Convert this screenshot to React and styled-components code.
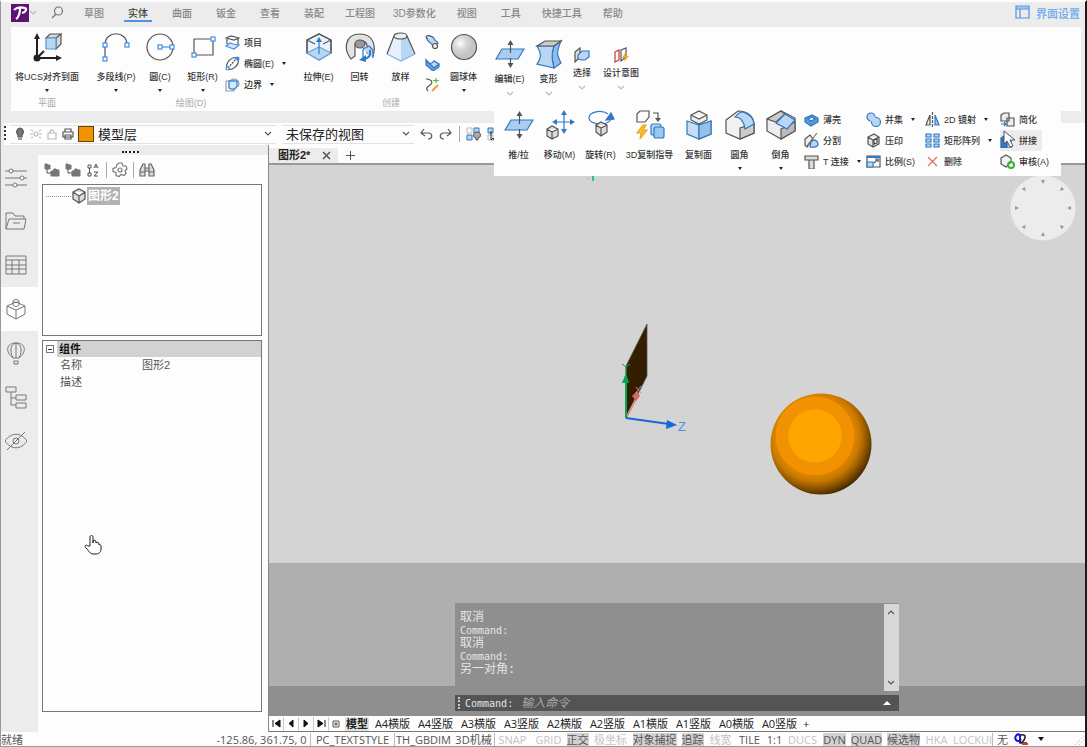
import React, { useState } from 'react'
import styled, { createGlobalStyle, css } from 'styled-components'

const GlobalStyle = createGlobalStyle`
    * {
        box-sizing: border-box;
    }
    body {
        margin: 0;
        background: #fdfdfd;
        font-family: "Liberation Sans", "Noto Sans CJK SC", sans-serif;
        color: #333;
    }
    button, input, select {
        font: inherit;
        color: inherit;
        border: 0;
        padding: 0;
        margin: 0;
        background: none;
    }
    svg {
        display: block;
        flex: none;
    }
`

const dark = '#555'
const blue = '#2f78c4'
const pale = '#b9d6f2'

const StyledApp = styled.div`
    min-height: 100vh;
    display: flex;
    flex-direction: column;
    border-left: 1px solid #999;
    border-right: 2px solid #1a1a1a;
    border-top: 2px solid #fdfdfd;
    background: #ececec;
    overflow: hidden;
`

/* ---------- menu ---------- */

const StyledMenu = styled.header`
    height: 25px;
    display: flex;
    align-items: center;
    padding: 0 5px 4px 10px;
    font-size: 10px;
    font-weight: 500;
    color: #888;
`

const StyledSearch = styled.button`
    margin: 0 8px 0 14px;
    display: flex;
    height: 16px;
    align-items: center;
`

const StyledTab = styled.button`
    padding: 0 ${({ $wide }) => ($wide ? 9 : 12)}px;
    height: 19px;
    white-space: nowrap;
    position: relative;
    color: ${({ $active }) => ($active ? '#444' : '#888')};
    ${({ $active }) => $active && css`
        &::after {
            content: "";
            position: absolute;
            left: 8px;
            right: 8px;
            bottom: 0;
            height: 2px;
            background: #4c93e6;
        }
    `}
`

const StyledSettings = styled.button`
    margin-left: auto;
    display: flex;
    align-items: center;
    gap: 6px;
    font-size: 11px;
    color: #6aa9ee;
`

/* ---------- ribbon ---------- */

const StyledRibbon = styled.section`
    position: relative;
    z-index: 2;
    height: 84px;
    margin: 0 4px 12px 10px;
    display: flex;
    background: #fdfdfd;
    font-size: 9px;
    line-height: 12px;
    font-weight: 500;
    white-space: nowrap;
`

const StyledGroup = styled.div`
    display: flex;
    flex-direction: column;
    align-items: center;
    margin-right: ${({ $gap }) => $gap || 0}px;
    padding-top: ${({ $top }) => $top || 5}px;
`

const StyledGroupRow = styled.div`
    display: flex;
    height: 65px;
`

const StyledGroupName = styled.div`
    color: #aaa;
    font-weight: 400;
`

const StyledTool = styled.button`
    flex: none;
    width: ${({ $w }) => $w}px;
    display: flex;
    flex-direction: column;
    align-items: center;
    justify-content: flex-start;
    padding-top: ${({ $top }) => $top || 0}px;
    white-space: nowrap;
`

const StyledToolText = styled.span`
    margin: ${({ $tight }) => ($tight ? 4 : 9)}px 0 6px;
`

const StyledCaret = styled.span`
    width: 0;
    height: 0;
    border: 2px solid transparent;
    border-top: 3px solid #222;
    border-bottom: 0;
`

const StyledList = styled.div`
    display: flex;
    flex-direction: column;
    width: ${({ $w }) => $w}px;
    padding-left: ${({ $center }) => ($center ? 0 : 2)}px;
    align-items: ${({ $center }) => ($center ? 'center' : 'stretch')};
`

const StyledSmallTool = styled.button`
    height: 21px;
    display: flex;
    align-items: center;
    gap: 4px;
    padding-right: 5px;
    justify-self: start;
    background: ${({ $hover }) => ($hover ? '#ececec' : 'none')};
    & > ${StyledCaret} {
        margin-left: 4px;
    }
`

const StyledFlyout = styled.div`
    position: absolute;
    right: 20px;
    top: 81px;
    width: 567px;
    height: 68px;
    padding-left: 4px;
    display: flex;
    background: #fdfdfd;
`

const StyledFlyoutGrid = styled.div`
    display: grid;
    grid-template-columns: 62px 59px 75px auto;
    grid-auto-rows: 21px;
    margin-left: 3px;
    padding-top: 1px;
    align-content: start;
`

/* ---------- layer bar ---------- */

const StyledLayerBar = styled.section`
    height: 22px;
    margin-left: 3px;
    display: flex;
    align-items: center;
    background: #fdfdfd;
    font-size: 13px;
    color: #222;
`

const StyledCombo = styled.label`
    height: 19px;
    display: flex;
    align-items: center;
    width: ${({ $w }) => $w}px;
    margin-left: ${({ $ml }) => $ml}px;
    border: solid #e2e2e2;
    border-width: 1px 0;
    padding-right: 4px;
    gap: 4px;
`

const StyledSelect = styled.select`
    flex: 1;
    appearance: none;
    outline: 0;
    height: 17px;
    line-height: 17px;
`

const StyledSwatch = styled.span`
    width: 16px;
    height: 16px;
    background: #f39200;
    border: 1px solid #6b4100;
`

const StyledBarTools = styled.div`
    display: flex;
    align-items: center;
    gap: 6px;
    margin-left: 5px;
`

const StyledBarLine = styled.span`
    width: 1px;
    height: 16px;
    background: #aaa;
`

/* ---------- left side ---------- */

const StyledWork = styled.main`
    flex: 1;
    display: flex;
`

const StyledLeft = styled.aside`
    width: 267px;
    display: flex;
    flex-direction: column;
`

const StyledGrip = styled.div`
    height: 10px;
    display: flex;
    align-items: center;
    justify-content: center;
    padding: 4px 8px 0 0;
    &::after {
        content: "";
        width: 17px;
        border-top: 2px dotted #222;
    }
`

const StyledLeftBody = styled.div`
    flex: 1;
    display: flex;
`

const StyledRail = styled.nav`
    width: 37px;
    display: flex;
    flex-direction: column;
`

const StyledRailButton = styled.button`
    height: 44px;
    padding-left: 4px;
    display: flex;
    align-items: center;
    background: ${({ $active }) => ($active ? '#fdfdfd' : 'none')};
`

const StyledPanel = styled.div`
    flex: 1;
    display: flex;
    flex-direction: column;
    padding: 5px 6px 20px 4px;
    background: #fdfdfd;
`

const StyledPanelTools = styled.div`
    height: 24px;
    padding: 0 0 4px 2px;
    display: flex;
    align-items: center;
    gap: 5px;
`

const StyledBox = styled.div`
    border: 1px solid #777;
    background: #fdfdfd;
    height: ${({ $h }) => ($h ? `${$h}px` : 'auto')};
    flex: ${({ $h }) => ($h ? 'none' : 1)};
    margin-bottom: ${({ $h }) => ($h ? 4 : 0)}px;
`

const StyledTreeItem = styled.div`
    display: flex;
    align-items: center;
    padding: 2px 0 0 3px;
    &::before {
        content: "";
        width: 25px;
        border-top: 1px dotted #999;
    }
`

const StyledTreeName = styled.span`
    font-size: 12px;
    line-height: 18px;
    padding: 0 1px;
    font-weight: 700;
    background: #b2b2b2;
    color: #fff;
`

const StyledTable = styled.table`
    width: 100%;
    border-collapse: collapse;
    font-size: 11px;
    line-height: 17px;
    color: #555;
    th, td {
        padding: 0;
        text-align: left;
        font-weight: 400;
        width: 99px;
    }
    th:first-child {
        padding-left: 17px;
    }
    td {
        width: auto;
    }
`

const StyledTableHead = styled.div`
    height: 16px;
    line-height: 16px;
    font-size: 11px;
    display: flex;
    align-items: center;
    color: #111;
    font-weight: 700;
    & > button {
        width: 8px;
        height: 8px;
        margin: 0 3px;
        border: 1px solid #777;
        display: flex;
        align-items: center;
        justify-content: center;
    }
    & > button::after {
        content: "";
        width: 4px;
        height: 1px;
        background: #333;
    }
    & > span {
        flex: 1;
        padding-left: 2px;
        text-align: left;
        background: #d2d2d2;
    }
`

/* ---------- drawing area ---------- */

const StyledRight = styled.div`
    flex: 1;
    min-width: 0;
    display: flex;
    flex-direction: column;
    border-left: 1px solid #888;
`

const StyledDocTabs = styled.div`
    height: 18px;
    padding-top: 3px;
    display: flex;
    background: #fdfdfd;
`

const StyledDocTab = styled.div`
    display: flex;
    align-items: center;
    gap: 11px;
    padding: 0 6px 0 9px;
    background: #ececec;
    font-size: 11px;
    line-height: 15px;
    font-weight: 700;
    color: #222;
`

const StyledPlainButton = styled.button`
    display: flex;
    align-items: center;
    padding: 0 ${({ $pad }) => $pad || 0}px;
    min-height: ${({ $h }) => $h || 0}px;
`

const StyledCanvas = styled.div`
    flex: 1;
    position: relative;
    display: flex;
    flex-direction: column;
    border-top: 2px solid #999;
    background: #d4d4d4;
`

const StyledFloor = styled.div`
    margin-top: auto;
    height: 153px;
    background: #afafaf;
    border-bottom: 30px solid #8f8f8f;
`

const StyledScene = styled.svg`
    position: absolute;
    left: 350px;
    top: 156px;
`

const StyledOrbit = styled.svg`
    position: absolute;
    right: 9px;
    top: 10px;
`

const StyledTick = styled.svg`
    position: absolute;
    left: 317px;
    top: 9px;
`

const StyledCommand = styled.div`
    position: absolute;
    left: 0;
    right: 0;
    bottom: 5px;
    width: 444px;
    margin: 0 auto;
    background: #8f8f8f;
    color: #e6e6e6;
    font-family: "DejaVu Sans Mono", "Noto Sans CJK SC", monospace;
    font-size: 10px;
`

const StyledLog = styled.div`
    height: 92px;
    padding: 8px 5px 0;
    line-height: 13px;
    display: flex;
    flex-direction: column;
`

const StyledLogText = styled.span`
    font-size: ${({ $cjk }) => ($cjk ? 12 : 10)}px;
    height: 13px;
`

const StyledScroll = styled.div`
    position: absolute;
    right: 0;
    top: 1px;
    width: 15px;
    height: 87px;
    padding: 5px 3px;
    display: flex;
    flex-direction: column;
    justify-content: space-between;
    background: #d8d8d8;
`

const StyledPrompt = styled.label`
    height: 16px;
    display: flex;
    align-items: center;
    padding: 0 8px 0 3px;
    background: #535455;
    &::before {
        content: "";
        height: 12px;
        margin-right: 5px;
        border-left: 2px dotted #ccc;
    }
`

const StyledInput = styled.input`
    flex: 1;
    margin-left: 8px;
    height: 16px;
    font-size: 12px;
    outline: 0;
    &::placeholder {
        color: #aaa;
        font-style: italic;
        opacity: 1;
    }
`

const StyledSheets = styled.div`
    height: 16px;
    display: flex;
    align-items: center;
    background: #fdfdfd;
    border-bottom: 1px solid #777;
    font: 11px/14px "Open Sans", "Noto Sans CJK SC", sans-serif;
    color: #222;
`

const StyledSheetNav = styled.button`
    width: 15px;
    height: 14px;
    display: flex;
    align-items: center;
    justify-content: center;
    border-right: 1px solid #ccc;
`

const StyledSheet = styled.button`
    width: ${({ $active }) => ($active ? 24 : 43)}px;
    margin: 0 ${({ $active }) => ($active ? 2 : 0)}px;
    white-space: nowrap;
    text-align: center;
    font-weight: ${({ $active }) => ($active ? 700 : 400)};
    background: ${({ $active }) => ($active ? '#e2e2e2' : 'none')};
`

const StyledStatus = styled.footer`
    height: 15px;
    display: flex;
    align-items: center;
    background: #fdfdfd;
    border-bottom: 1px solid #999;
    font: 11px/13px "Open Sans", "Noto Sans CJK SC", sans-serif;
    color: #555;
`

const StyledReady = styled.span`
    flex: 1;
`

const StyledStatusItem = styled.button`
    flex: none;
    width: ${({ $w }) => $w}px;
    height: 13px;
    display: flex;
    justify-content: center;
    white-space: nowrap;
    color: ${({ $off }) => ($off ? '#c4c4c4' : '#555')};
    border-right: 1px solid ${({ $line }) => ($line ? '#bbb' : 'transparent')};
    & > span {
        background: ${({ $on }) => ($on ? '#d2d2d2' : 'none')};
    }
`

const StyledHand = styled.svg`
    position: absolute;
    left: 84px;
    top: 534px;
`

const StyledPointer = styled.svg`
    position: absolute;
    right: 44px;
    top: 22px;
`

/* ---------- icons ---------- */

const Icon = ({ s = 30, w, h, children, box, ...rest }) => (
    <svg width={w || s} height={h || s} viewBox={box || `0 0 ${w || s} ${h || s}`} fill="none" stroke={dark} strokeWidth="1.2" aria-hidden="true" {...rest}>
        {children}
    </svg>
)

const Node = ({ x, y }) => <rect x={x - 2} y={y - 2} width="4" height="4" fill="#fff" stroke="#3f8ee0" />

const Chevron = ({ up, c = '#555' }) => (
    <Icon w={8} h={6} stroke={c}><path d={up ? 'M1 5l3-3 3 3' : 'M1 1l3 3 3-3'} /></Icon>
)

const Logo = () => (
    <svg width="18" height="18" viewBox="0 0 18 18" role="img" aria-label="logo">
        <rect width="18" height="18" fill="#5c1470" />
        <path d="M3 6c3-3 7-3 11-2 2 1 1 4-3 5M9 4c0 5-1 9-4 11" fill="none" stroke="#fff" strokeWidth="2.2" />
    </svg>
)

const UcsIcon = () => (
    <Icon>
        <path d="M14 6l4-4h11l-5 4zM29 2v10l-5 5V6z" fill="#d8d8d8" />
        <path d="M14 6h10v11H14z" fill={pale} stroke="#5b96d0" />
        <path d="M5 26V5M5 26h20M5 26l7-7" stroke="#222" strokeWidth="2" />
        <path d="M5 1L2 7h6zM30 26l-6-3v6z" fill="#222" stroke="none" />
        <circle cx="5" cy="26" r="3.5" fill="#222" stroke="none" />
    </Icon>
)

const PolylineIcon = () => (
    <Icon>
        <path d="M4 27V13C4-2 26-2 26 13" />
        <Node x={4} y={27} /><Node x={4} y={13} /><Node x={26} y={13} />
    </Icon>
)

const CircleIcon = () => (
    <Icon><circle cx="15" cy="15" r="13" /><path d="M16 15h10" stroke="#3f8ee0" /><Node x={15} y={15} /><Node x={27} y={15} /></Icon>
)

const RectIcon = () => (
    <Icon><path d="M6 7h19v16H6z" /><Node x={25} y={7} /><Node x={6} y={23} /></Icon>
)

const ProjectIcon = () => (
    <Icon s={15}>
        <path d="M1 3l5-2 8 2-5 2zM2 3v6M13 3v6" />
        <path d="M1 11l4-3 3 1 6 1-5 4-3-1z" fill="#d6e8fa" stroke="#3f8ee0" />
    </Icon>
)

const EllipseIcon = () => (
    <Icon s={15}>
        <ellipse cx="7.500" cy="7.500" rx="7" ry="4.500" transform="rotate(-45 7.500 7.500)" />
        <path d="M3 12l8-9" strokeDasharray="2 1" />
        <circle cx="12.500" cy="2.500" r="1.500" fill="#3f8ee0" stroke="#3f8ee0" /><circle cx="2.500" cy="12.500" r="1.500" fill="#fff" stroke="#3f8ee0" />
    </Icon>
)

const BorderIcon = () => (
    <Icon s={15}>
        <path d="M1 4h8v10H1zM5 4a5 5 0 1 1 8 6" stroke="#999" />
        <path d="M4 4h8v5a5 5 0 0 1-8 2z" fill="#d6e8fa" stroke="#3f8ee0" strokeWidth="1.500" />
    </Icon>
)

const ExtrudeIcon = () => (
    <Icon>
        <path d="M3 8l12-6 12 6v13l-12 7-12-7z" fill="#eaf3fc" />
        <path d="M3 21l12-6 12 6-12 7z" fill={pale} stroke="#6aa5e0" />
        <path d="M3 21V8l12-6 12 6v13M3 8l8 4M27 8l-8 4" />
        <path d="M15 22V9" stroke={blue} /><path d="M15 5l-3 5h6z" fill={blue} stroke="none" />
    </Icon>
)

const RevolveIcon = () => (
    <Icon>
        <path d="M6 27C-2 17 0 2 15 2c14 0 16 13 13 22l-6-3V13c-2-6-12-5-12 1v10z" fill="#e2e2e2" />
        <ellipse cx="15" cy="12" rx="5" ry="4" fill="#999" />
        <path d="M18 17l6-3 4 4v8M18 17v9" fill="#b9d6f2" stroke={blue} />
        <path d="M25 18c1 6-1 8-6 9" stroke={blue} strokeWidth="2" /><path d="M21 23v7l-7-2z" fill={blue} stroke="none" />
    </Icon>
)

const LoftIcon = () => (
    <Icon>
        <path d="M8 4L1 22l14 7 14-7L21 4z" fill="#e6f0fb" stroke="none" />
        <path d="M15 7v22l13-7-7-18z" fill={pale} stroke="none" />
        <path d="M1 22l14 7 14-7" stroke="#7fb2e4" />
        <path d="M8 4L1 22M29 22L21 4" />
        <ellipse cx="14.500" cy="4" rx="6.500" ry="3" fill="#eee" />
    </Icon>
)

const SweepIcon = () => (
    <Icon s={15}><ellipse cx="5" cy="3" rx="4" ry="2" transform="rotate(20 5 3)" fill="#d6e8fa" /><path d="M2 4c1 4 4 3 6 7l5-3C11 5 9 6 9 3" fill={pale} stroke={blue} /><circle cx="10" cy="11" r="2.500" fill="#eee" /></Icon>
)

const ThickenIcon = () => (
    <Icon s={15}><path d="M1 4c3 5 6 4 8 1l5 3v3l-6 4-7-6z" fill="#6ba4dc" stroke={blue} /><path d="M1 4c3 5 6 4 8 1l5 3-5 4z" fill={pale} stroke={blue} /></Icon>
)

const SplineIcon = () => (
    <Icon s={15}><path d="M1 2c5 0 8 3 4 6s-4 4-2 6" /><path d="M11 1v5M8 3.500h6" stroke="#59b447" /><path d="M7 14l6-6" stroke="#e8a13a" strokeWidth="2" /></Icon>
)

const SphereIcon = () => (
    <Icon>
        <defs>
            <radialGradient id="ball" cx=".35" cy=".35"><stop offset="0" stopColor="#fff" /><stop offset=".5" stopColor="#d8d8d8" /><stop offset="1" stopColor="#c4c4c4" /></radialGradient>
        </defs>
        <circle cx="15" cy="15" r="12.500" fill="url(#ball)" />
    </Icon>
)

const PushPullIcon = () => (
    <Icon>
        <path d="M7 10h22l-6 10H1z" fill="#a9cdf0" stroke={blue} />
        <path d="M15.500 14V4M15.500 19v7" /><path d="M15.500 1l-3 5h6zM15.500 29l-3-5h6z" fill={dark} stroke="none" />
    </Icon>
)

const DeformIcon = () => (
    <Icon>
        <path d="M20 7l7-5c-5 12-4 14 0 22l-7 5c-2-8-3-14 0-22z" fill="#8fbdea" stroke={blue} />
        <path d="M3 7h17c-3 8-2 14 0 22L3 25c5-7 4-11 0-18z" fill={pale} stroke={blue} />
        <path d="M3 7l8-5h16l-7 5z" fill="#ccc" />
    </Icon>
)

const SelectIcon = () => (
    <Icon s={16}><path d="M1 5l5-4v9l-5 5z" fill="#ddd" /><path d="M4 8l4-4h7v6l-4 3H8l-4-1z" fill={pale} stroke={blue} /></Icon>
)

const IntentIcon = () => (
    <Icon s={16}><path d="M2 5l4-2v10l-4 2z" stroke="#c33" /><path d="M8 3l5-2v9l-5 4z" /><path d="M12 6l-3 5h3l-1 4 5-6h-3z" fill="#f5a623" stroke="none" /></Icon>
)

const MoveIcon = () => (
    <Icon>
        <path d="M19 3v18M10 12h18" stroke={blue} />
        <path d="M19 0l-3 5h6zM19 24l-3-5h6zM7 12l5-3v6zM30 12l-5-3v6z" fill={blue} stroke="none" />
        <path d="M2 19l5-3 6 3v7l-6 3-5-3zM2 19l5 3 6-3M7 22v7" fill="#ddd" />
    </Icon>
)

const RotateIcon = () => (
    <Icon><path d="M22 4C15-1 3 2 3 8c0 4 6 6 12 6 7 0 11-4 10-7" stroke={blue} /><path d="M25 3l3 6-8 1z" fill={blue} stroke={blue} /><path d="M10 15l5-3 6 3v7l-6 4-5-4zM10 15l5 3 6-3M15 18v8" fill="#ddd" /></Icon>
)

const CopyGuideIcon = () => (
    <Icon>
        <path d="M2 4l3-3h9v6l-4 5H2zM18 3h5v6" /><path d="M20 8h6l-3 4z" fill={dark} stroke="none" />
        <path d="M8 15l-6 8h4l-1 6 7-9H8l3-5z" fill="#f8bf3a" stroke="#eda41f" />
        <rect x="16" y="14" width="10" height="11" rx="2" fill={pale} stroke={blue} /><rect x="19" y="17" width="10" height="11" rx="2" fill="#9cc6ee" stroke={blue} />
    </Icon>
)

const CopyFaceIcon = () => (
    <Icon>
        <path d="M3 11l12 4 12-4v13l-12 5-12-5zM15 15v14" fill="#c6def5" stroke={blue} />
        <path d="M15 15l12-4v13l-12 5z" fill="#94c0ea" stroke={blue} />
        <path d="M7 5l8-4 8 4v5l-8 4-8-4zM7 5l8 4 8-4" fill="#eee" />
    </Icon>
)

const FilletIcon = () => (
    <Icon>
        <path d="M1 10L13 1c10 0 16 6 16 14v8l-14 6-14-6z" fill="#f2f2f2" /><path d="M15 18v11l14-6v-9z" fill="#ccc" />
        <path d="M10 7c3-4 5-5 8-5 7 2 11 7 11 12l-9 5C19 12 16 7 10 7z" fill={pale} stroke={blue} />
    </Icon>
)

const ChamferIcon = () => (
    <Icon>
        <path d="M1 9l14-8 14 7v13l-14 8-14-8z" fill="#eee" /><path d="M1 9l14-8 4 3-9 8z" fill="#ccc" /><path d="M15 19l14-7v9l-14 8z" fill="#bbb" />
        <path d="M19 4l10 6-8 9-11-6z" fill={pale} stroke={blue} />
    </Icon>
)

const ShellIcon = () => <Icon s={15}><path d="M1 6l7-3 6 3v4l-7 4-6-4z" fill="#5c98d6" stroke={blue} /><path d="M4 7l4-2 3 2-4 2z" fill="#fff" stroke={blue} /></Icon>
const SplitIcon = () => <Icon s={15}><path d="M1 6l5-4 3 4-6 8-2-2z" fill="#eee" /><path d="M13 0L2 14" stroke="#875" /><path d="M7 9c3-4 7-1 7 2 0 4-6 3-8 3z" fill={pale} stroke={blue} /></Icon>
const TeeIcon = () => <Icon s={15}><path d="M1 2h13v4H1zM5 6h5v9H5z" fill="#ddd" /></Icon>
const UnionIcon = () => <Icon s={15}><circle cx="5" cy="5" r="4" fill={pale} stroke={blue} /><circle cx="10" cy="10" r="4.500" fill={pale} stroke={blue} /><path d="M5 9l4-4" stroke={pale} strokeWidth="3" /></Icon>
const ImprintIcon = () => <Icon s={15}><path d="M2 4l6-3 5 3v7l-6 3-5-3zM2 4l5 3 6-3M7 7v7" fill="#e4e4e4" /><path d="M8 7l3-1v4l-3 1z" fill="#fff" stroke="#444" /></Icon>
const ScaleIcon = () => <Icon s={15}><path d="M1 2h13v11H1z" /><path d="M1 8h6v5H1z" fill={pale} stroke={blue} /><path d="M1 3h13" stroke={blue} strokeWidth="2" /><path d="M8 9l3-3M9 5h3v3" /></Icon>
const MirrorIcon = () => <Icon s={15}><path d="M5 3v10H1z" /><path d="M10 3v10h4z" fill="#9cc6ee" stroke={blue} /><path d="M7.500 0v15" strokeDasharray="3 1" /></Icon>
const ArrayIcon = () => (
    <Icon s={15} stroke={blue}>
        {[1, 6, 11].map(y => <path key={y} d={`M1 ${y}h5v3H1zM9 ${y}h5v3H9z`} fill={pale} />)}
    </Icon>
)
const DeleteIcon = () => <Icon s={15}><path d="M3 3l9 9M12 3l-9 9" stroke="#e07070" /></Icon>
const SimplifyIcon = () => <Icon s={15}><path d="M1 3l3-2h5v8H1zM7 6h7v8H7z" fill="#eee" /><path d="M1 12h5M4 10l2 2-2 2" stroke={blue} /></Icon>
const JoinIcon = () => <Icon s={15}><path d="M1 5l3-2h3v12H1z" fill="#2f78c4" stroke="#2a6cb2" /><path d="M7 5h4v10H7z" fill={pale} stroke="#2a6cb2" /></Icon>
const AuditIcon = () => <Icon s={15}><path d="M1 4l5-3 5 3v4l-5 5-5-3z" fill="#f2f2f2" /><circle cx="11" cy="11" r="3" stroke="#36b430" strokeWidth="2" /></Icon>

const FoldersIcon = () => (
    <Icon s={16} strokeWidth="1"><path d="M1 2h2l1 1h2v4H1zM7 9h2l1-2h2l1 1h2v6H7z" fill="#777" stroke="#777" /><path d="M3 7v4h4" /></Icon>
)
const SortIcon = () => <Icon s={15}><path d="M2 2h3v3H2zM2 10h3v3H2zM3.500 5v5M8 5l2-4 2 4M9 4h2M8 9h4l-4 4h4" strokeWidth="1" /></Icon>
const GearIcon = () => <Icon s={16}><path d="M7 1h3l1 3 3 0 1 3-2 1.500 1 3-2 2-3-1-2 2-3-1 0-3-3-1 0-3 3-1 1-3z" stroke="#777" /><circle cx="8" cy="8" r="2" stroke="#777" /></Icon>
const BinocularsIcon = () => <Icon s={16}><path d="M4 2h2v12H1V8zM12 2h-2v12h5V8zM6 6h4v3H6M1 10h5M10 10h5" stroke="#666" fill="#ddd" /></Icon>

const CubeIcon = () => <Icon s={16}><path d="M2 4l6-3 6 3v7l-6 4-6-4zM2 4l6 4 6-4M8 8v7" fill="#ddd" /></Icon>

const rail = [
    { id: '设置', d: 'M0 5h22M0 12h22M0 19h22', extra: [[6, 5], [17, 12], [10, 19]] },
    { id: '文件', d: 'M1 19V3h7l2 3h9v3M1 19h18l2-10H4L1 19M8 13h7' },
    { id: '表格', d: 'M1 2h20v18H1zM1 6h20M1 11h20M1 15h20M7 6v14M14 6v14' },
    { id: '组件', d: 'M2 8l9-4 9 4v8l-9 5-9-5zM2 8l9 4 9-4M11 12v9M8 3v4c1 2 5 2 6 0V3M8 3c1-2 5-2 6 0-1 2-5 2-6 0' },
    { id: '渲染', d: 'M8 16C0 10 1 1 11 1s11 9 3 15zM8 16C4 8 6 2 11 1c5 1 7 7 3 15M11 1v15M9 19h4v3H9z' },
    { id: '结构', d: 'M1 1h10v5H1zM11 9h10v5H11zM11 17h10v5H11zM6 6v13h5M6 12h5' },
    { id: '可见性', d: 'M0 11c6-9 16-9 22 0-6 9-16 9-22 0zM8 11a3 3 0 1 0 6 0 3 3 0 1 0-6 0M2 20L20 2' },
]

/* ---------- data ---------- */

const menus = [['草图'], ['实体'], ['曲面'], ['钣金'], ['查看'], ['装配'], ['工程图', true], ['3D参数化', true], ['视图'], ['工具'], ['快捷工具', true], ['帮助']]

const flyoutTools = [
    ['推/拉', 41, PushPullIcon], ['移动(M)', 41, MoveIcon], ['旋转(R)', 41, RotateIcon], ['3D复制指导', 57, CopyGuideIcon],
    ['复制面', 41, CopyFaceIcon], ['圆角', 41, FilletIcon, true], ['倒角', 41, ChamferIcon, true],
]

const flyoutSmall = [
    ['薄壳', ShellIcon], ['并集', UnionIcon, true], ['2D 镜射', MirrorIcon, true], ['简化', SimplifyIcon],
    ['分割', SplitIcon], ['压印', ImprintIcon], ['矩形阵列', ArrayIcon, true], ['拼接', JoinIcon],
    ['T 连接', TeeIcon, true], ['比例(S)', ScaleIcon], ['删除', DeleteIcon], ['审核(A)', AuditIcon],
]

const sheets = ['A4横版', 'A4竖版', 'A3横版', 'A3竖版', 'A2横版', 'A2竖版', 'A1横版', 'A1竖版', 'A0横版', 'A0竖版']

const statusItems = [
    { t: '-125.86, 361.75, 0', w: 98, line: true },
    { t: 'PC_TEXTSTYLE', w: 84, line: true },
    { t: 'TH_GBDIM', w: 58 },
    { t: '3D机械', w: 42, line: true },
    { t: 'SNAP', w: 36, off: true },
    { t: 'GRID', w: 36, off: true },
    { t: '正交', w: 22, on: true },
    { t: '极坐标', w: 44, off: true },
    { t: '对象捕捉', w: 44, on: true },
    { t: '追踪', w: 32, on: true },
    { t: '线宽', w: 24, off: true },
    { t: 'TILE', w: 34 },
    { t: '1:1', w: 16 },
    { t: 'DUCS', w: 40, off: true },
    { t: 'DYN', w: 24, on: true },
    { t: 'QUAD', w: 40, on: true },
    { t: '候选物', w: 34, on: true },
    { t: 'HKA', w: 32, off: true },
    { t: 'LOCKUI', w: 40, off: true, line: true },
    { t: '无', w: 20 },
]

/* ---------- parts ---------- */

const Tool = ({ name, w, icon: I, caret, soft, top, tight }) => (
    <StyledTool $w={w} $top={top}>
        <I />
        <StyledToolText $tight={tight}>{name}</StyledToolText>
        {caret && <StyledCaret />}
        {soft && <Chevron c="#bbb" />}
    </StyledTool>
)

const SmallTool = ({ name, icon: I, caret, hover }) => (
    <StyledSmallTool $hover={hover}>
        <I />
        {name}
        {caret && <StyledCaret />}
    </StyledSmallTool>
)

const Menu = () => {
    const [active, setActive] = useState('实体')
    return (
        <StyledMenu>
            <Logo />
            <Chevron c="#bbb" />
            <StyledSearch aria-label="搜索">
                <Icon s={13} stroke="#777"><circle cx="7.500" cy="5" r="4" /><path d="M5 8l-4 4" /></Icon>
            </StyledSearch>
            {menus.map(([name, wide]) => (
                <StyledTab key={name} $wide={wide} $active={active === name} onClick={() => setActive(name)}>{name}</StyledTab>
            ))}
            <StyledSettings>
                <Icon s={15} stroke="#4c93e6"><path d="M1 1h13v12H1zM1 4h13M5 4v9" /><path d="M1 2.500h13" strokeWidth="2" strokeOpacity=".5" /></Icon>
                界面设置
            </StyledSettings>
        </StyledMenu>
    )
}

const Flyout = () => (
    <StyledFlyout>
        {flyoutTools.map(([name, w, icon, caret]) => (
            <Tool key={name} name={name} w={w} icon={icon} caret={caret} top={2} />
        ))}
        <StyledFlyoutGrid>
            {flyoutSmall.map(([name, icon, caret]) => (
                <SmallTool key={name} name={name} icon={icon} caret={caret} hover={name === '拼接'} />
            ))}
        </StyledFlyoutGrid>
        <StyledPointer width="14" height="18" viewBox="0 0 14 18">
            <path d="M1 1v13l3-3 3 6 3-1-3-6h5z" fill="#fff" stroke="#555" />
        </StyledPointer>
    </StyledFlyout>
)

const Ribbon = () => (
    <StyledRibbon>
        <StyledGroup $gap={11}>
            <StyledGroupRow><Tool name="将UCS对齐到面" w={72} icon={UcsIcon} caret /></StyledGroupRow>
            <StyledGroupName>平面</StyledGroupName>
        </StyledGroup>
        <StyledGroup $gap={10}>
            <StyledGroupRow>
                <Tool name="多段线(P)" w={44} icon={PolylineIcon} caret />
                <Tool name="圆(C)" w={44} icon={CircleIcon} caret />
                <Tool name="矩形(R)" w={41} icon={RectIcon} caret />
                <StyledList $w={65}>
                    <SmallTool name="项目" icon={ProjectIcon} />
                    <SmallTool name="椭圆(E)" icon={EllipseIcon} caret />
                    <SmallTool name="边界" icon={BorderIcon} caret />
                </StyledList>
            </StyledGroupRow>
            <StyledGroupName>绘图(D)</StyledGroupName>
        </StyledGroup>
        <StyledGroup $gap={6}>
            <StyledGroupRow>
                <Tool name="拉伸(E)" w={41} icon={ExtrudeIcon} />
                <Tool name="回转" w={41} icon={RevolveIcon} />
                <Tool name="放样" w={41} icon={LoftIcon} />
                <StyledList $w={22} $center>
                    {[['扫掠', SweepIcon], ['加厚', ThickenIcon], ['样条', SplineIcon]].map(([label, I]) => (
                        <StyledPlainButton key={label} aria-label={label} $h={21}><I /></StyledPlainButton>
                    ))}
                </StyledList>
                <Tool name="圆球体" w={41} icon={SphereIcon} caret />
            </StyledGroupRow>
            <StyledGroupName>创建</StyledGroupName>
        </StyledGroup>
        <StyledGroup $top={12}>
            <StyledGroupRow>
                <Tool name="编辑(E)" w={39} icon={PushPullIcon} soft tight />
                <Tool name="变形" w={39} icon={DeformIcon} soft tight />
                <Tool name="选择" w={28} icon={SelectIcon} soft top={8} tight />
                <Tool name="设计意图" w={50} icon={IntentIcon} soft top={8} tight />
            </StyledGroupRow>
        </StyledGroup>
        <Flyout />
    </StyledRibbon>
)

const LayerBar = () => (
    <StyledLayerBar>
        <Icon w={4} h={16} stroke="#333"><path d="M1 0v16" strokeDasharray="2 2" strokeWidth="2" /></Icon>
        <StyledCombo $w={266} $ml={2}>
            <Icon w={12} h={14} style={{ marginLeft: 4 }}><path d="M6 1a4 4 0 0 1 2 7v2H4V8a4 4 0 0 1 2-7z" fill="#777" /><path d="M4 12h4" /></Icon>
            <Icon w={12} h={12} stroke="#bbb"><circle cx="6" cy="6" r="2" /><path d="M0 6h3M9 6h3M1 2l2 1M11 2L9 3M1 10l2-1M11 10L9 9" /></Icon>
            <Icon w={12} h={12} stroke="#bbb"><path d="M2 5h8v6H2zM4 5c0-4 4-4 4-1" /></Icon>
            <Icon w={12} h={12}><path d="M3 4V1h6v3M1 4h10v5H1zM3 7h6v4H3z" /></Icon>
            <StyledSwatch />
            <StyledSelect aria-label="图层"><option>模型层</option></StyledSelect>
            <Chevron />
        </StyledCombo>
        <StyledCombo $w={132} $ml={6}>
            <StyledSelect aria-label="视图" style={{ marginLeft: 4 }}><option>未保存的视图</option></StyledSelect>
            <Chevron />
        </StyledCombo>
        <StyledBarTools>
            <StyledPlainButton aria-label="撤销"><Icon w={14} h={14}><path d="M5 2L2 6l4 3M2 6h7c5 0 5 6 0 6" /></Icon></StyledPlainButton>
            <StyledPlainButton aria-label="重做"><Icon w={14} h={14}><path d="M9 2l3 4-4 3M12 6H5c-5 0-5 6 0 6" /></Icon></StyledPlainButton>
            <StyledBarLine />
            <StyledPlainButton aria-label="图层显示">
                <Icon w={15} h={15} strokeWidth="1"><path d="M1 1h5v5H1z" stroke="#bbb" /><path d="M8 1h5v5H8zM1 8h5v5H1z" fill={pale} stroke={blue} /><path d="M11 5a3 3 0 0 1 1 6v2h-2v-2a3 3 0 0 1 1-6z" fill="#aaa" /></Icon>
            </StyledPlainButton>
            <StyledPlainButton aria-label="图层选择">
                <Icon w={15} h={15} strokeWidth="1"><path d="M1 1h5v5H1z" fill={pale} stroke={blue} /><path d="M1 8h5v5H1z" stroke="#bbb" /><path d="M4 4v9l2-2 2 4" stroke="#222" /></Icon>
            </StyledPlainButton>
        </StyledBarTools>
    </StyledLayerBar>
)

const LeftSide = () => {
    const [page, setPage] = useState('组件')
    return (
        <StyledLeft>
            <StyledGrip />
            <StyledLeftBody>
                <StyledRail>
                    {rail.map(({ id, d, extra }) => (
                        <StyledRailButton key={id} aria-label={id} $active={page === id} onClick={() => setPage(id)}>
                            <Icon w={22} h={23} stroke="#777" strokeWidth="1">
                                <path d={d} />
                                {extra && extra.map(([x, y]) => <circle key={y} cx={x} cy={y} r="2" fill="#fff" />)}
                            </Icon>
                        </StyledRailButton>
                    ))}
                </StyledRail>
                <StyledPanel>
                    <StyledPanelTools>
                        <StyledPlainButton aria-label="展开"><FoldersIcon /></StyledPlainButton>
                        <StyledPlainButton aria-label="折叠"><FoldersIcon /></StyledPlainButton>
                        <StyledPlainButton aria-label="排序"><SortIcon /></StyledPlainButton>
                        <StyledBarLine />
                        <StyledPlainButton aria-label="设置"><GearIcon /></StyledPlainButton>
                        <StyledBarLine />
                        <StyledPlainButton aria-label="查找"><BinocularsIcon /></StyledPlainButton>
                    </StyledPanelTools>
                    <StyledBox $h={152}>
                        <StyledTreeItem>
                            <CubeIcon />
                            <StyledTreeName>图形2</StyledTreeName>
                        </StyledTreeItem>
                    </StyledBox>
                    <StyledBox>
                        <StyledTableHead><button aria-label="折叠组件" /><span>组件</span></StyledTableHead>
                        <StyledTable>
                            <tbody>
                                <tr><th scope="row">名称</th><td>图形2</td></tr>
                                <tr><th scope="row">描述</th><td /></tr>
                            </tbody>
                        </StyledTable>
                    </StyledBox>
                </StyledPanel>
            </StyledLeftBody>
        </StyledLeft>
    )
}

const Scene = () => (
    <StyledScene width="260" height="180" viewBox="0 0 260 180">
        <defs>
            <radialGradient id="body" cx=".44" cy=".42" r=".62">
                <stop offset=".42" stopColor="#ffa500" />
                <stop offset=".43" stopColor="#f39200" />
                <stop offset=".62" stopColor="#f39200" />
                <stop offset=".63" stopColor="#dc8400" />
                <stop offset=".72" stopColor="#c87800" />
                <stop offset=".82" stopColor="#965a00" />
                <stop offset=".92" stopColor="#5c3700" />
                <stop offset="1" stopColor="#2e1b00" />
            </radialGradient>
        </defs>
        <path d="M28 3v52L7 97V45z" fill="#331f00" stroke="#555" strokeWidth=".8" />
        <path d="M7 97l11-21" stroke="#d98a8a" strokeWidth="2" />
        <path d="M13 75l5-5 3 5-4 5z" fill="#d06a6a" />
        <path d="M17 66l5 6M22 65l-5 7" stroke="#d98a8a" />
        <path d="M7 97V60" stroke="#0aa550" strokeWidth="2" />
        <path d="M7 52l-4 10h7z" fill="#0aa550" />
        <path d="M3 43l4 3 4-3M7 46v6" fill="none" stroke="#0aa550" />
        <path d="M7 97l43 6" stroke="#1469d6" strokeWidth="2" />
        <path d="M58 104l-10-5-1 9z" fill="#1469d6" />
        <text x="59" y="110" fontSize="13" fill="#4c93e6" fontFamily="Liberation Sans">Z</text>
        <circle cx="202" cy="123" r="50.500" fill="url(#body)" />
    </StyledScene>
)

const Orbit = () => (
    <StyledOrbit width="66" height="66" viewBox="0 0 66 66">
        <circle cx="33" cy="33" r="32.500" fill="#ececec" />
        {[0, 45, 90, 135, 180, 225, 270, 315].map(a => (
            <path key={a} d="M31 5h4l-2 4z" fill="#999" transform={`rotate(${a} 33 33)`} />
        ))}
    </StyledOrbit>
)

const Command = () => (
    <StyledCommand>
        <StyledLog>
            <StyledLogText $cjk>取消</StyledLogText>
            <StyledLogText>Command:</StyledLogText>
            <StyledLogText $cjk>取消</StyledLogText>
            <StyledLogText>Command:</StyledLogText>
            <StyledLogText $cjk>另一对角:</StyledLogText>
        </StyledLog>
        <StyledScroll><Chevron up /><Chevron /></StyledScroll>
        <StyledPrompt>
            Command:
            <StyledInput placeholder="输入命令" />
            <Icon w={8} h={5} fill="#fff" stroke="none"><path d="M4 0l4 4H0z" /></Icon>
        </StyledPrompt>
    </StyledCommand>
)

const Sheets = () => (
    <StyledSheets>
        {[['首页', 'M1 1v7M8 1v7L3 4.500z'], ['上一页', 'M6 1v7L2 4.500z'], ['下一页', 'M2 1v7l4-3.500z'], ['末页', 'M1 1v7l5-3.500zM8 1v7']].map(([label, d]) => (
            <StyledSheetNav key={label} aria-label={label}><Icon s={9} fill="#111" stroke="#111" strokeWidth="1"><path d={d} /></Icon></StyledSheetNav>
        ))}
        <StyledPlainButton aria-label="列表" $pad={3}><Icon s={8} strokeWidth="1"><path d="M1 1h6v6H1zM3 3h2v2H3z" /></Icon></StyledPlainButton>
        <StyledSheet $active>模型</StyledSheet>
        {sheets.map(s => <StyledSheet key={s}>{s}</StyledSheet>)}
        <StyledPlainButton $pad={2}>+</StyledPlainButton>
    </StyledSheets>
)

const StatusBar = () => (
    <StyledStatus>
        <StyledReady>就绪</StyledReady>
        {statusItems.map(({ t, w, line, off, on }) => (
            <StyledStatusItem key={t} $w={w} $line={line} $off={off} $on={on}><span>{t}</span></StyledStatusItem>
        ))}
        <Icon w={16} h={12}><path d="M7 2c-3-2-6 2-4 5 2 2 4 1 5-1M7 1v9" stroke="#1414c8" strokeWidth="2" /><path d="M8 2c6-1 5 4 0 8h6" stroke="#222" strokeWidth="1.500" /><path d="M9 11h6" stroke="#d33" strokeWidth="2" /></Icon>
        <StyledPlainButton aria-label="更多" $pad={9}><Icon w={6} h={4} fill="#111" stroke="none"><path d="M0 0h6L3 4z" /></Icon></StyledPlainButton>
        <Icon w={32} h={12} stroke="#bbb"><path d="M22 12l9-9M26 12l5-5" strokeDasharray="1 2" /></Icon>
    </StyledStatus>
)

const App = () => (
    <>
        <GlobalStyle />
        <StyledApp>
            <Menu />
            <Ribbon />
            <LayerBar />
            <StyledWork>
                <LeftSide />
                <StyledRight>
                    <StyledDocTabs>
                        <StyledDocTab>
                            图形2*
                            <StyledPlainButton aria-label="关闭"><Icon s={11} strokeWidth="1.500"><path d="M2 2l7 7M9 2l-7 7" /></Icon></StyledPlainButton>
                        </StyledDocTab>
                        <StyledPlainButton aria-label="新建" $pad={8}><Icon s={9} strokeWidth="1"><path d="M4.500 0v9M0 4.500h9" /></Icon></StyledPlainButton>
                    </StyledDocTabs>
                    <StyledCanvas>
                        <StyledFloor />
                        <Scene />
                        <StyledTick width="8" height="7" viewBox="0 0 8 7"><path d="M7 2v5" stroke="#2ec48a" strokeWidth="2" /><path d="M1 6l3-3" stroke="#e8a0a0" /></StyledTick>
                        <Orbit />
                        <Command />
                    </StyledCanvas>
                    <Sheets />
                </StyledRight>
            </StyledWork>
            <StatusBar />
            <StyledHand width="18" height="22" viewBox="0 0 18 22">
                <path d="M6 12V3c0-2 3-2 3 0v6-2c1-1 3-1 3 1v1c1-1 3-1 3 1v1c1-1 2 0 2 1v3c0 4-3 5-5 5H9c-3 0-4-3-7-6-2-2 0-4 2-2z" fill="#fff" stroke="#1c1c34" />
            </StyledHand>
        </StyledApp>
    </>
)

export default App
